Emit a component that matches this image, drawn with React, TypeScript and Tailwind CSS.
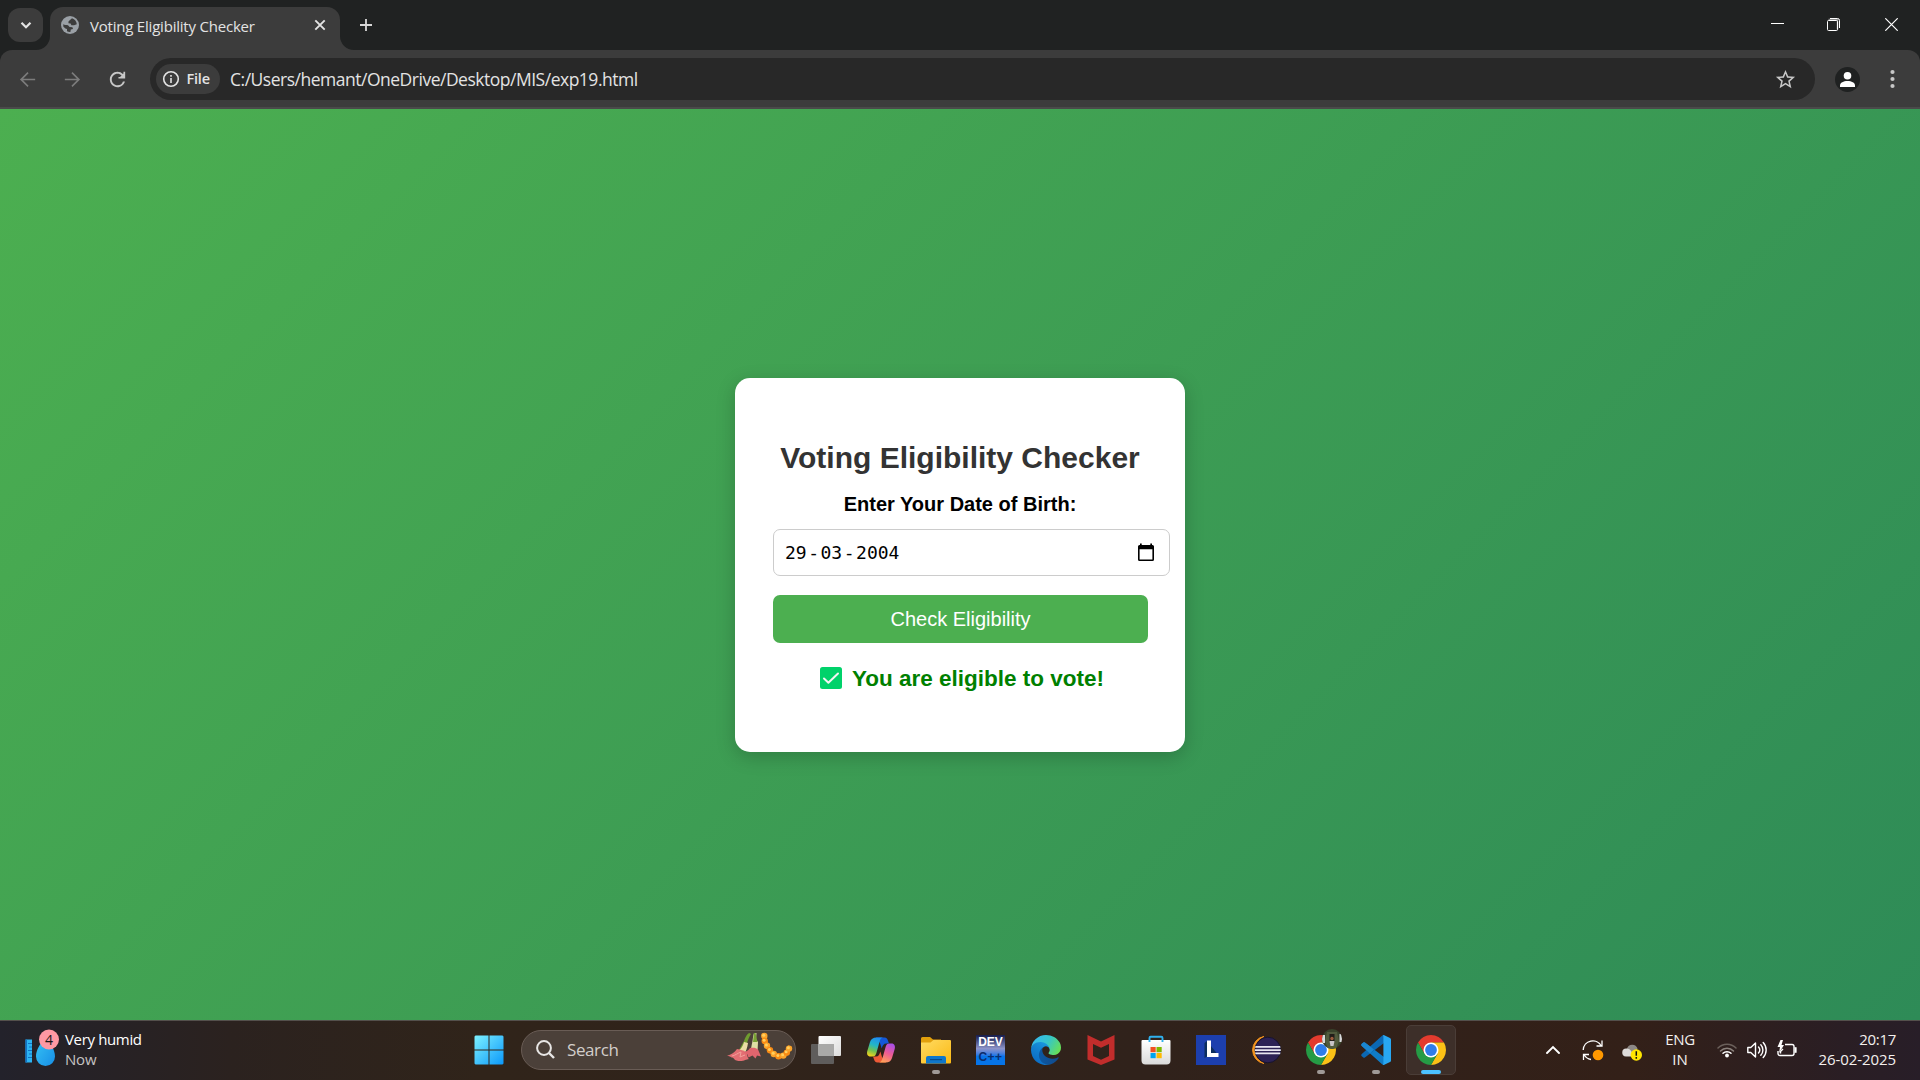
import React from "react";

const UI = "font-['Open_Sans',sans-serif]";
const ARIAL = "font-['Liberation_Sans',Arial,sans-serif]";

function Globe() {
  return (
    <svg className="size-[18px] shrink-0" viewBox="0 0 18 18">
      <circle cx="9" cy="9" r="9" fill="#9aa0a6" />
      <path
        d="M11 2.2 7.6 5.2 7.4 7.2 9.6 7.4 10.4 9.2 13 9.2 15.8 8.2A7 7 0 0 0 11 2.2ZM2.2 8.2C3.6 9 5.6 9 7 9.2L8.6 11 11.4 11.2 12 13 9.8 13.6 9.4 15.9A7 7 0 0 1 6 15.3L6 13 4.4 12.4 2.4 10.8Z"
        fill="#3c3c3c"
      />
    </svg>
  );
}

function TabStrip() {
  return (
    <div className="flex h-[50px] w-full shrink-0 items-start bg-[#202222]">
      <div className="ml-2 mt-2 flex h-[34px] w-[35px] shrink-0 items-center justify-center rounded-[12px] bg-[#3c3c3c]">
        <svg className="size-[12px]" viewBox="0 0 12 12" fill="none" stroke="#e3e3e3" strokeWidth="2.2">
          <path d="M1.500 3.700 6 8.200l4.500-4.500" />
        </svg>
      </div>
      <div className="relative ml-[7px] mt-[7px] flex h-[43px] w-[290px] shrink-0 items-start rounded-t-[13px] bg-[#3c3c3c]">
        <svg className="absolute -left-[14px] bottom-0 size-[14px]" viewBox="0 0 14 14">
          <path d="M14 0v14H0A14 14 0 0 0 14 0Z" fill="#3c3c3c" />
        </svg>
        <svg className="absolute -right-[14px] bottom-0 size-[14px]" viewBox="0 0 14 14">
          <path d="M0 0v14h14A14 14 0 0 1 0 0Z" fill="#3c3c3c" />
        </svg>
        <div className="flex h-[36px] flex-1 items-center pl-[11px]">
          <Globe />
          <span className="ml-[11px] whitespace-nowrap pt-[1px] text-[15px] leading-[20px] tracking-[-0.21px] text-[#e3e3e3]">
            Voting Eligibility Checker
          </span>
          <svg className="ml-auto mr-[14px] size-[12px]" viewBox="0 0 12 12" stroke="#e3e3e3" strokeWidth="1.9">
            <path d="m1.300 1.300 9.400 9.400M10.700 1.300l-9.400 9.400" />
          </svg>
        </div>
      </div>
      <svg className="ml-5 mt-[19px] size-[12px]" viewBox="0 0 12 12" stroke="#d8d8d8" strokeWidth="1.800">
        <path d="M6 0v12M0 6h12" />
      </svg>
      <div className="ml-auto flex h-[48px] items-center pr-[22px]">
        <svg className="size-[13px]" viewBox="0 0 13 13" shapeRendering="crispEdges">
          <path d="M0 5h13v1H0z" fill="#fff" />
        </svg>
        <svg className="ml-[43px] size-[13px]" viewBox="0 0 13 13" fill="none" stroke="#fff">
          <path d="M1.500 1.500h9v10" stroke="#8c8c8c" strokeWidth="1.5" />
          <rect x=".5" y="2.500" width="10" height="10" rx="1" />
          <path d="M3 .5h7.500a2 2 0 0 1 2 2V10" />
        </svg>
        <svg className="ml-[45px] size-[13px]" viewBox="0 0 13 13" stroke="#fff" strokeWidth="1.200">
          <path d="m.3.3 12.400 12.400M12.700.3.3 12.700" />
        </svg>
      </div>
    </div>
  );
}

function Toolbar() {
  return (
    <div className="h-[59px] w-full shrink-0 bg-[#202222]">
      <div className="flex h-full w-full items-start rounded-t-[12px] border-b-2 border-[#4a4a4a] bg-[#3c3c3c] pt-2">
        <div className="flex h-[42px] items-center">
          <svg className="ml-[16px] size-[23px]" viewBox="0 0 24 24" fill="#7c7c7c">
            <path d="M20 11.100H7.430l5.700-5.700L12 4.200l-7.900 7.800 7.900 7.800 1.130-1.200-5.700-5.700H20z" />
          </svg>
          <svg className="ml-[22px] size-[23px]" viewBox="0 0 24 24" fill="#7c7c7c">
            <path d="M4 11.100h12.570l-5.700-5.700L12 4.200l7.900 7.800-7.900 7.800-1.130-1.200 5.700-5.700H4z" />
          </svg>
          <svg className="ml-[22px] size-[23px]" viewBox="0 0 24 24" fill="#c7c7c7">
            <path d="M17.650 6.350A7.958 7.958 0 0 0 12 4c-4.420 0-7.990 3.580-7.990 8s3.570 8 7.990 8c3.730 0 6.840-2.550 7.730-6h-2.080A5.990 5.990 0 0 1 12 18c-3.310 0-6-2.690-6-6s2.690-6 6-6c1.660 0 3.140.69 4.220 1.780L14.600 9.500H13V11h7V4h-1.800v1.800z" />
          </svg>
        </div>
        <div className="ml-[21px] flex h-[42px] w-[1665px] items-center rounded-full bg-[#282828] pl-[6px]">
          <div className="flex h-[30px] w-[64px] items-center rounded-full bg-[#3c3c3c] pl-[6px]">
            <svg className="size-[18px]" viewBox="0 0 18 18" fill="none" stroke="#e3e3e3" strokeWidth="1.600">
              <circle cx="9" cy="9" r="7.300" />
              <path d="M9 8v5M9 4.900v1.800" />
            </svg>
            <span className="ml-[6.500px] text-[14.500px] font-semibold leading-[20px] tracking-[-0.2px] text-[#e3e3e3]">File</span>
          </div>
          <span className="ml-[10px] whitespace-nowrap text-[17.500px] leading-[24px] tracking-[-0.49px] text-[#e3e3e3]">
            C:/Users/hemant/OneDrive/Desktop/MIS/exp19.html
          </span>
          <svg className="ml-auto mr-[18px] size-[23px]" viewBox="0 0 24 24" fill="#c7c7c7">
            <path d="m22 9.240-7.190-.62L12 2 9.190 8.630 2 9.240l5.460 4.730L5.820 21 12 17.270 18.180 21l-1.630-7.030L22 9.240zM12 15.400l-3.760 2.270 1-4.280-3.320-2.880 4.380-.38L12 6.100l1.710 4.040 4.380.38-3.320 2.880 1 4.280L12 15.400z" />
          </svg>
        </div>
        <div className="flex h-[42px] items-center">
          <svg className="ml-5 size-[25px]" viewBox="0 0 25 25">
            <circle cx="12.500" cy="12.500" r="12.500" fill="#1f2121" />
            <circle cx="12.500" cy="8.700" r="3.800" fill="#fff" />
            <path d="M5 20v-1.700c0-2.500 3.500-4.300 7.500-4.300s7.500 1.800 7.500 4.300V20Z" fill="#fff" />
          </svg>
          <svg className="ml-[30px] h-[20px] w-[5px]" viewBox="0 0 5 20" fill="#c7c7c7">
            <circle cx="2.500" cy="3" r="2.100" />
            <circle cx="2.500" cy="10" r="2.100" />
            <circle cx="2.500" cy="17" r="2.100" />
          </svg>
        </div>
      </div>
    </div>
  );
}

function Card() {
  return (
    <div className={`${ARIAL} flex h-[374px] w-[450px] flex-col items-center rounded-[15px] bg-white px-[38px] pt-[63px] shadow-[0_5px_19px_rgba(0,0,0,0.2)]`}>
      <h2 className="whitespace-nowrap text-[30px] font-bold leading-[34px] text-[#333]">Voting Eligibility Checker</h2>
      <label className="mt-[18px] whitespace-nowrap text-[20px] font-bold leading-[22px] text-black">Enter Your Date of Birth:</label>
      <div className="mt-[14px] flex h-[47px] w-[397px] shrink-0 items-center self-start rounded-[7px] border border-[#ccc] pl-[11px] pr-[14px]">
        <span className="flex pt-[1px] font-['DejaVu_Sans_Mono',monospace] text-[18px] leading-[22px] text-black">
          <span>29</span>
          <span className="mx-[1.500px]">-</span>
          <span>03</span>
          <span className="mx-[1.500px]">-</span>
          <span>2004</span>
        </span>
        <svg className="ml-auto h-[19px] w-[18px]" viewBox="0 0 18 19">
          <path d="M1 3.500A1.500 1.500 0 0 1 2.500 2H3V.5h1.700V2h8.600V.5H15V2h.5A1.500 1.500 0 0 1 17 3.500v13a1.500 1.500 0 0 1-1.500 1.500h-13A1.500 1.500 0 0 1 1 16.500ZM2.600 6.300v10.100h12.800V6.300Z" fillRule="evenodd" />
        </svg>
      </div>
      <button className="mt-[19px] h-[48px] w-[375px] shrink-0 self-start rounded-[7px] bg-[#4caf50] text-[20px] leading-[22px] text-white">
        Check Eligibility
      </button>
      <div className="mt-[22px] flex items-center pl-[4px] text-[22.500px] font-bold leading-[26px] text-[green]">
        <svg className="mr-[10px] size-[22px]" viewBox="0 0 22 22">
          <rect width="22" height="22" rx="2.500" fill="#00d26a" />
          <path d="m4 11.500 4.400 4.200L18 6.500" fill="none" stroke="#f4f4f4" strokeWidth="2" strokeLinecap="round" strokeLinejoin="round" />
        </svg>
        <span className="whitespace-nowrap pt-[1px]">You are eligible to vote!</span>
      </div>
    </div>
  );
}

function Chrome({ children }: { children?: React.ReactNode }) {
  return (
    <svg className="size-[30px] overflow-visible" viewBox="0 0 30 30">
      <path d="M2.010 7.500A15 15 0 0 1 27.990 7.500H15L8.500 18.750Z" fill="#e33b2e" />
      <path d="M27.990 7.500A15 15 0 0 1 15 30l6.500-11.250L15 7.500Z" fill="#fbc116" />
      <path d="M15 30A15 15 0 0 1 2.010 7.500L8.500 18.750H21.500Z" fill="#259b45" />
      <circle cx="15" cy="15" r="7.500" fill="#fff" />
      <circle cx="15" cy="15" r="5.900" fill="#2f7de9" />
      {children}
    </svg>
  );
}

function AppCell({ children, state }: { children: React.ReactNode; state?: "open" | "active" }) {
  return (
    <div className="flex h-[60px] w-[55px] shrink-0 items-center justify-center">
      <div
        className={
          state === "active"
            ? "relative flex size-[50px] items-center justify-center rounded-[5px] border border-[#4a3d37] bg-[#3d2f29]"
            : "relative flex size-[50px] items-center justify-center"
        }
      >
        {children}
        {state === "open" && <div className="absolute bottom-[1px] left-[21px] h-[4px] w-[8px] rounded-full bg-[#a09a97]" />}
        {state === "active" && <div className="absolute bottom-0 left-[14px] h-[4px] w-[20px] rounded-full bg-[#4cc2ff]" />}
      </div>
    </div>
  );
}

function StartIcon() {
  return (
    <svg className="size-[30px]" viewBox="0 0 30 30">
      <defs>
        <linearGradient id="win" x1="0" y1="0" x2="1" y2="1" gradientUnits="objectBoundingBox">
          <stop offset="0" stopColor="#7df1ff" />
          <stop offset="1" stopColor="#0b98fa" />
        </linearGradient>
      </defs>
      <path d="M1.500.5H14.500V14.500H.5V1.500ZM15.500.5H28.500L29.500 1.500V14.500H15.500ZM.5 15.500H14.500V29.500H1.500L.5 28.500ZM15.500 15.500H29.500V28.500L28.500 29.500H15.500Z" fill="url(#win)" />
    </svg>
  );
}

function SearchArt() {
  const petals = [
    [38.300, 4], [38.700, 9], [41, 13.800], [44, 18.200], [47.800, 22], [52.500, 24.200], [57.300, 23.600], [60.800, 20.600], [63, 16.600],
  ];
  return (
    <svg className="h-[31px] w-[67px]" viewBox="0 0 67 31">
      <path d="M23.500 1c-2 0-4 4-5.500 8l-5 9 4 3 4-10c1-3 2-6 4-9Z" fill="#6f9b2f" />
      <path d="M18 10c-1 5-5 9-8.500 11l8 3c2-4 4-8 4.500-13Z" fill="#e9dca4" />
      <path d="M11 17c-2 3-6 6-10 6.500 2 1 4 1 4.500 2 3 0 2 2.500 5 3 3 1 7 .5 8.500-.5l4-1c-2-1-1-5-3.500-7-1.500-2-5-2-8.500-3Z" fill="#e36e73" />
      <path d="M6 24c3-.5 6-3 9-4l-1 5 5-2" stroke="#f3a09a" fill="none" />
      <path d="M28 1c-1 3-1 5-1.500 8l-2 10 7 1 .5-10-2-3 .5-6Z" fill="#dfe0a5" />
      <path d="M28 1h1.500l2 9h-4.500Z" fill="#79a235" />
      <path d="M24 16c-1 2-4 4-6.500 4.500l4 2 1 3 4-2 3 3 1.500-3 4 1-3-7c-2-2-5-2-8-1.500Z" fill="#e0656e" />
      <path d="M38 2c1 12 7 21 15 22s9-4 11-10" stroke="#d97a0c" strokeWidth="4" fill="none" />
      {petals.map(([x, y], i) => (
        <g key={i}>
          <circle cx={x} cy={y} r="3.200" fill={i % 2 ? "#f98a13" : "#fba32a"} />
          <circle cx={x - 0.6} cy={y - 0.8} r="1.500" fill="#ffcf5e" />
        </g>
      ))}
    </svg>
  );
}

function CopilotIcon() {
  return (
    <svg className="size-[30px]" viewBox="0 0 30 30">
      <defs>
        <linearGradient id="cpa" x1=".6" y1="0" x2=".3" y2="1">
          <stop offset="0" stopColor="#1f8df0" />
          <stop offset=".4" stopColor="#22b5c9" />
          <stop offset=".7" stopColor="#6fc252" />
          <stop offset="1" stopColor="#f2d21b" />
        </linearGradient>
        <linearGradient id="cpb" x1=".7" y1="0" x2=".3" y2="1">
          <stop offset="0" stopColor="#a94ee6" />
          <stop offset=".5" stopColor="#ee5c93" />
          <stop offset="1" stopColor="#ffa257" />
        </linearGradient>
      </defs>
      <path d="M10 2.500h8.500c2.200 0 3 1.500 3.500 3.300L23 8.500h-2.500c-3 0-4 2-4.800 5L14 8Z" fill="#1458d8" />
      <path d="M20 27.500h-8.500c-2.200 0-3-1.500-3.500-3.300L7 21.500h3c2.500 0 3.500-2 4.300-5L16 22Z" fill="#ee5a37" />
      <path d="M10.500 2.500h6.500c-2.200.5-2.900 2.200-3.600 4.800l-3 10.700c-.8 2.500-1.500 3.500-4 3.500H4.500C1.500 21.500.5 19 1.300 16L4 7c1-3 3-4.500 6.500-4.500Z" fill="url(#cpa)" />
      <path d="M19.500 27.500h-6.500c2.200-.5 2.900-2.200 3.600-4.800l3-10.700c.8-2.500 1.500-3.500 4-3.500h1.900c3 0 4 2.500 3.200 5.500L26 23c-1 3-3 4.500-6.500 4.500Z" fill="url(#cpb)" />
    </svg>
  );
}

function EdgeIcon() {
  return (
    <svg className="size-[30px]" viewBox="0 0 256 256">
      <defs>
        <linearGradient id="ed1" x1="0" y1="0" x2="1" y2="0">
          <stop offset="0" stopColor="#0c59a4" />
          <stop offset="1" stopColor="#114a8b" />
        </linearGradient>
        <linearGradient id="ed2" x1=".8" y1="0" x2=".3" y2="1">
          <stop offset="0" stopColor="#1b9de2" />
          <stop offset=".5" stopColor="#127fd0" />
          <stop offset="1" stopColor="#0a6bc4" />
        </linearGradient>
        <linearGradient id="ed3" x1="0" y1=".3" x2="1" y2=".7">
          <stop offset="0" stopColor="#35b8f1" />
          <stop offset=".5" stopColor="#36c5c9" />
          <stop offset="1" stopColor="#69e052" />
        </linearGradient>
      </defs>
      <path fill="url(#ed1)" d="M231 190.500c-3.400 1.800-6.900 3.400-10.500 4.700a101.500 101.500 0 0 1-35.900 6.400c-47.300 0-88.500-32.500-88.500-74.300 0-11.400 6.400-21.900 16.400-27.300-42.800 1.800-53.800 46.400-53.800 72.500 0 73.900 68.100 81.400 82.800 81.400 7.900 0 19.800-2.300 27-4.600l1.300-.4a128.300 128.300 0 0 0 66.600-52.800 4 4 0 0 0-5.400-5.600z" />
      <path fill="url(#ed2)" d="M105.700 241.600a79.200 79.200 0 0 1-22.700-21.300 80.700 80.700 0 0 1 29.500-120c3.100-1.500 8.500-4.100 15.600-4a32.400 32.400 0 0 1 25.700 13 31.900 31.900 0 0 1 6.300 18.700c0-.2 24.500-79.600-80-79.600-43.900 0-80 41.600-80 78.200a130.200 130.200 0 0 0 12.100 56 128 128 0 0 0 156.400 67.100 75.500 75.500 0 0 1-62.800-8z" />
      <path fill="url(#ed3)" d="M152.300 148.900c-.8 1-3.300 2.500-3.300 5.700 0 2.600 1.700 5.200 4.800 7.300 14.400 10.100 41.600 8.700 41.700 8.700 10.700 0 21.200-2.900 30.400-8.300A61.800 61.800 0 0 0 256 108.900c.3-22.400-8-37.300-11.300-43.900C223.500 23.900 177.700 0 128 0A128 128 0 0 0 0 126.200c.5-36.500 36.800-66 80-66 3.500 0 23.500.3 42 10.100 16.300 8.600 24.900 18.900 30.800 29.200 6.200 10.700 7.300 24.100 7.300 29.500s-2.700 13.300-7.800 19.900z" />
    </svg>
  );
}

function TaskbarApps() {
  return (
    <div className="flex h-[60px] items-center pl-[2px]">
      <AppCell>
        <svg className="size-[30px]" viewBox="0 0 30 30">
          <defs>
            <linearGradient id="tv" x1="0" y1="0" x2="1" y2="1">
              <stop offset="0" stopColor="#fff" />
              <stop offset="1" stopColor="#dcdcdc" />
            </linearGradient>
          </defs>
          <rect x="0" y="9" width="23" height="20" rx="1" fill="#5f5d5c" />
          <rect x="7.500" y="1" width="22.500" height="20" rx="1" fill="url(#tv)" />
          <path d="M7.500 9H23v12H8.500a1 1 0 0 1-1-1Z" fill="#a9a9a8" />
        </svg>
      </AppCell>
      <AppCell><CopilotIcon /></AppCell>
      <AppCell state="open">
        <svg className="size-[30px]" viewBox="0 0 30 30">
          <defs>
            <linearGradient id="fo" x1="0" y1="0" x2="1" y2="1">
              <stop offset="0" stopColor="#ffdb62" />
              <stop offset="1" stopColor="#fbb914" />
            </linearGradient>
          </defs>
          <path d="M0 3.500A1.500 1.500 0 0 1 1.500 2H9l3 2.500h8v6H0Z" fill="#e2a00c" />
          <path d="M0 7.500h9.500L12.500 5H29a1 1 0 0 1 1 1v21.500a1 1 0 0 1-1 1H1a1 1 0 0 1-1-1Z" fill="url(#fo)" />
          <path d="M5 28.500V23a2 2 0 0 1 2-2h16a2 2 0 0 1 2 2v5.500Z" fill="#0f77cb" />
          <path d="M9 24.600h12" stroke="#084b8c" strokeWidth="1.200" />
        </svg>
      </AppCell>
      <AppCell>
        <div className={`${ARIAL} flex h-[30px] w-[29px] flex-col items-center bg-linear-to-b from-[#171c4c] via-[#8d93c8] via-45% to-[#0674e8] to-70%`}>
          <span className="text-[12px] font-bold leading-[15px] text-white">DEV</span>
          <span className="text-[12px] font-bold leading-[14px] tracking-[0.5px] text-[#0b2d6c]">C++</span>
        </div>
      </AppCell>
      <AppCell><EdgeIcon /></AppCell>
      <AppCell>
        <svg className="size-[30px]" viewBox="0 0 30 30">
          <path d="M1.500 0 15 6.500 28.500 0v24.500L15 30 1.500 24.500ZM7 9v12l8 3.700L23 21V9l-8 3.700Z" fill="#c12d2c" fillRule="evenodd" />
        </svg>
      </AppCell>
      <AppCell>
        <svg className="size-[30px]" viewBox="0 0 30 30">
          <defs>
            <linearGradient id="st" x1="0" y1="0" x2="0" y2="1">
              <stop offset="0" stopColor="#fff" />
              <stop offset="1" stopColor="#dadada" />
            </linearGradient>
          </defs>
          <path d="M.5 6a1 1 0 0 1 1-1h27a1 1 0 0 1 1 1v19.500a4 4 0 0 1-4 4h-21a4 4 0 0 1-4-4Z" fill="url(#st)" />
          <path d="M8.500 7V3a1.200 1.200 0 0 1 1.200-1.200h10.600A1.200 1.200 0 0 1 21.500 3v4" fill="none" stroke="#2fb1ee" strokeWidth="1.900" />
          <path d="M9.500 12h5.200v5.200H9.500z" fill="#f25022" />
          <path d="M15.500 12h5.200v5.200h-5.200z" fill="#7fba00" />
          <path d="M9.500 18h5.200v5.200H9.500z" fill="#00a4ef" />
          <path d="M15.500 18h5.200v5.200h-5.200z" fill="#ffb900" />
        </svg>
      </AppCell>
      <AppCell>
        <svg className="size-[30px]" viewBox="0 0 30 30">
          <rect width="30" height="30" fill="#1c3fae" />
          <path d="m11 6-2.500 2v15l2.500-1.500H21v-3Z" fill="#0b2d5e" />
          <path d="M11 5.500h4V18h7.500v4H11z" fill="#fff" />
        </svg>
      </AppCell>
      <AppCell>
        <svg className="size-[30px]" viewBox="0 0 30 30">
          <path d="M13 1.500A13.700 13.700 0 0 0 13 28.500A14.500 14.500 0 0 1 13 1.500Z" fill="#f4941e" stroke="#f4941e" />
          <circle cx="16.800" cy="15" r="12.800" fill="#2c2255" stroke="#17132f" />
          <path d="M4.500 11h24.600l.4 1.800H4zM3.800 14.200h26V16h-26zM4 17.400h25.500l-.4 1.800H4.500z" fill="#e8e6f0" />
        </svg>
      </AppCell>
      <AppCell state="open">
        <Chrome>
          <clipPath id="av"><circle cx="26" cy="4" r="10" /></clipPath>
          <g clipPath="url(#av)">
            <path d="M16-6h20v20H16z" fill="#39432b" />
            <path d="M16 0h3v8h-3zM33.500-1H36v8h-2.500z" fill="#d9d9dc" />
            <path d="M21-3h10l2 9-3 8h-8l-3-8Z" fill="#515b3d" />
            <path d="M23.500-1h5v8h-5z" fill="#221d19" />
            <circle cx="26" cy="3.500" r="1.700" fill="#9c5a3c" />
            <path d="M23.500 6h5l-1 5h-3Z" fill="#c8c4c7" />
          </g>
        </Chrome>
      </AppCell>
      <AppCell state="open">
        <svg className="size-[30px]" viewBox="0 0 30 30">
          <path d="M.8 8.700 2.300 7.500q.8-.5 1.600.1L23 22v7.500q-1.200.6-2.200-.4L.8 11q-1.100-1.100 0-2.300Z" fill="#0f7cc7" />
          <path d="M.8 21.300 2.300 22.500q.8.500 1.600-.1L23 8V.5q-1.200-.6-2.200.4L.8 19q-1.100 1.100 0 2.300Z" fill="#0b68b4" />
          <path d="M.8 8.700 2.300 7.500q.8-.5 1.600.1L13 14.500 9 18.400.8 11q-1.100-1.100 0-2.300Z" fill="#1a86d0" />
          <path d="M21.800.1q.8-.2 1.500.1l5.700 2.700q1 .5 1 1.700v20.800q0 1.200-1 1.700l-5.700 2.700q-.7.300-1.500.1 .6-.4.600-1.400V1.500Q22.400.5 21.800.1Z" fill="#28a7f2" />
        </svg>
      </AppCell>
      <AppCell state="active"><Chrome /></AppCell>
    </div>
  );
}

function Tray() {
  return (
    <div className="ml-auto flex h-[60px] items-center text-[15px] leading-[20px] text-[#f4f0ee]">
      <svg className="mt-[1px] h-[10px] w-[14px]" viewBox="0 0 14 10" fill="none" stroke="#fff" strokeWidth="1.900" strokeLinecap="round">
        <path d="m1 8 6-6 6 6" />
      </svg>
      <svg className="ml-[22px] size-[22px]" viewBox="0 0 22 22" fill="none" stroke="#fff" strokeWidth="1.300">
        <path d="M1.200 11A9.600 9.600 0 0 1 19.300 7M20 1.500V7h-5.500M9 20.500A9.600 9.600 0 0 1 2 15.500M1.500 21v-5.500H7" />
        <circle cx="16" cy="16" r="5.300" fill="#ff9800" stroke="none" />
      </svg>
      <svg className="ml-[18px] mt-[4px] h-[18px] w-[20px]" viewBox="0 0 20 18">
        <path d="M5 5.500A5.500 5.500 0 0 1 15.500 5.500L14 12H4Z" fill="#8d8885" />
        <path d="M4 13.500a4 4 0 0 1 .5-8Q8 5.500 9 8l4 5.500Z" fill="#dedbd9" />
        <circle cx="14.300" cy="12" r="5.700" fill="#ffe600" />
        <path d="M14.300 8.300v4.400M14.300 14v1.700" stroke="#111" strokeWidth="1.500" />
      </svg>
      <div className="mb-[1px] ml-[18px] flex w-[40px] flex-col items-center">
        <span className="tracking-[-0.3px]">ENG</span>
        <span>IN</span>
      </div>
      <svg className="ml-[17px] size-[20px]" viewBox="0 0 20 20" fill="none" strokeWidth="1.500" strokeLinecap="round">
        <path d="M1 8a12.500 12.500 0 0 1 18 0" stroke="#6b605b" />
        <path d="M3.500 11a9 9 0 0 1 13 0" stroke="#8a807b" />
        <path d="M6 13.300a5.700 5.700 0 0 1 8 0" stroke="#fff" />
        <circle cx="10" cy="15.500" r="1.900" fill="#fff" />
      </svg>
      <svg className="ml-[10px] size-[20px]" viewBox="0 0 20 20" fill="none" stroke="#fff" strokeWidth="1.400" strokeLinecap="round" strokeLinejoin="round">
        <path d="M.8 7.500h3L8.500 3v14l-4.700-4.500h-3Z" />
        <path d="M11.500 7a4.500 4.500 0 0 1 0 6M13.800 4.700a7.700 7.700 0 0 1 0 10.600M16.200 2.500a11 11 0 0 1 0 15" />
      </svg>
      <svg className="ml-[10px] size-[20px]" viewBox="0 0 20 20" fill="none" stroke="#fff" strokeWidth="1.400">
        <path d="M8 4.500h7a2 2 0 0 1 2 2v7a2 2 0 0 1-2 2H3a2 2 0 0 1-2-2V11" />
        <path d="M17.500 7.500h1.800v5h-1.800" fill="#fff" strokeWidth=".6" />
        <path d="M3.500 0 .5 7H3l-1 6 5-8H4.500L6 0Z" fill="#fff" stroke="none" />
        <path d="M3.500 13.500v-2L6 9" />
      </svg>
      <div className="mb-[2px] flex w-[123px] flex-col items-end pr-[24px]">
        <span className="tracking-[-0.3px]">20:17</span>
        <span className="whitespace-nowrap tracking-[-0.07px]">26-02-2025</span>
      </div>
    </div>
  );
}

function Taskbar() {
  return (
    <div className="flex h-[60px] w-full shrink-0 items-center border-t border-[#54504c] bg-[linear-gradient(90deg,#23222b_0%,#272225_6%,#2b221f_12%,#30241a_25%,#30221b_60%,#332018_85%,#2a1e24_96%,#281e28_100%)] pb-[2px]">
      <div className="flex w-[462px] shrink-0 items-center pl-[25px]">
        <svg className="h-[38px] w-[34px] shrink-0 -translate-y-[2px]" viewBox="0 0 34 38">
          <defs>
            <linearGradient id="drop" x1="0" y1="0" x2="1" y2="1">
              <stop offset="0" stopColor="#37c4f5" />
              <stop offset="1" stopColor="#178ee6" />
            </linearGradient>
          </defs>
          <path d="M.5 10.500h6.500v23H.5z" fill="#2db4f2" />
          <path d="M.5 10.500H2v23H.5zM3 14h4v1H3zM4 17.500h3v1H4zM3 21h4v1H3zM4 24.500h3v1H4zM3 28h4v1H3z" fill="#1272c4" />
          <path d="M20.500 8C15 15 11 21 11 27.500a9.500 9.500 0 0 0 19 0C30 21 26 15 20.500 8Z" fill="url(#drop)" />
          <circle cx="24" cy="10.500" r="10" fill="#ff99a4" />
          <text x="24" y="15.500" textAnchor="middle" fontSize="14" fill="#1d1415">4</text>
        </svg>
        <div className="mb-[2px] ml-[6px] flex flex-col text-[15px] leading-[20px]">
          <span className="whitespace-nowrap tracking-[-0.35px] text-white">Very humid</span>
          <span className="tracking-[-0.2px] text-[#c5c2c2]">Now</span>
        </div>
      </div>
      <div className="-ml-[1px] flex w-[56px] shrink-0 items-center justify-center"><StartIcon /></div>
      <div className="ml-[4px] flex h-[40px] w-[275px] shrink-0 items-center rounded-full border border-[#695c55] bg-[#4b4039] pl-[14px]">
        <svg className="size-[19px]" viewBox="0 0 19 19" fill="none" stroke="#e8e6e5" strokeWidth="2">
          <circle cx="8" cy="8" r="6.900" />
          <path d="m13 13 5 5" strokeWidth="2.400" />
        </svg>
        <span className="ml-[12px] text-[17px] leading-[22px] tracking-[-0.4px] text-[#d3cecb]">Search</span>
        <div className="-mt-[4px] ml-auto mr-[2px]"><SearchArt /></div>
      </div>
      <TaskbarApps />
      <Tray />
    </div>
  );
}

export default function App() {
  return (
    <div className={`${UI} flex h-[1080px] w-[1920px] flex-col overflow-hidden`}>
      <TabStrip />
      <Toolbar />
      <main className="flex flex-1 items-center justify-center bg-[linear-gradient(135deg,#4caf50,#2e8b57)]">
        <Card />
      </main>
      <Taskbar />
    </div>
  );
}
